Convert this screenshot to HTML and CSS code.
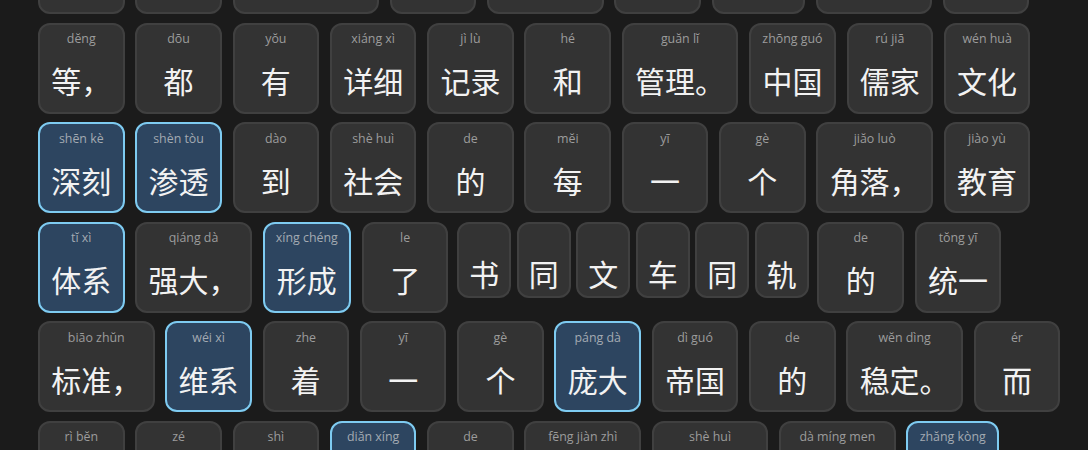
FILE: index.html
```html
<!DOCTYPE html>
<html lang="zh-CN">
<head>
<meta charset="utf-8">
<title>拼音阅读</title>
<link rel="stylesheet" href="styles.css">
</head>
<body>
<main class="reader">
  <div class="flow">
    <div class="tile"><span class="py">rén kŏu</span><span class="hz">人口</span></div>
    <div class="tile"><span class="py">hù jí</span><span class="hz">户籍</span></div>
    <div class="tile"><span class="py">tŭ dì miàn jī</span><span class="hz">土地面积</span></div>
    <div class="tile"><span class="py">fù shuì</span><span class="hz">赋税</span></div>
    <div class="tile"><span class="py">yáo yì</span><span class="hz">徭役、</span></div>
    <div class="tile"><span class="py">bīng yì</span><span class="hz">兵役</span></div>
    <div class="tile"><span class="py">gōng chéng</span><span class="hz">工程</span></div>
    <div class="tile"><span class="py">xíng fá</span><span class="hz">刑罚、</span></div>
    <div class="tile"><span class="py">shāng yè</span><span class="hz">商业</span></div>

    <div class="tile"><span class="py">dĕng</span><span class="hz">等，</span></div>
    <div class="tile"><span class="py">dōu</span><span class="hz">都</span></div>
    <div class="tile"><span class="py">yŏu</span><span class="hz">有</span></div>
    <div class="tile"><span class="py">xiáng xì</span><span class="hz">详细</span></div>
    <div class="tile"><span class="py">jì lù</span><span class="hz">记录</span></div>
    <div class="tile"><span class="py">hé</span><span class="hz">和</span></div>
    <div class="tile"><span class="py">guăn lĭ</span><span class="hz">管理。</span></div>
    <div class="tile"><span class="py">zhōng guó</span><span class="hz">中国</span></div>
    <div class="tile"><span class="py">rú jiā</span><span class="hz">儒家</span></div>
    <div class="tile"><span class="py">wén huà</span><span class="hz">文化</span></div>

    <div class="tile is-new"><span class="py">shēn kè</span><span class="hz">深刻</span></div>
    <div class="tile is-new"><span class="py">shèn tòu</span><span class="hz">渗透</span></div>
    <div class="tile"><span class="py">dào</span><span class="hz">到</span></div>
    <div class="tile"><span class="py">shè huì</span><span class="hz">社会</span></div>
    <div class="tile"><span class="py">de</span><span class="hz">的</span></div>
    <div class="tile"><span class="py">mĕi</span><span class="hz">每</span></div>
    <div class="tile"><span class="py">yī</span><span class="hz">一</span></div>
    <div class="tile"><span class="py">gè</span><span class="hz">个</span></div>
    <div class="tile"><span class="py">jiăo luò</span><span class="hz">角落，</span></div>
    <div class="tile"><span class="py">jiào yù</span><span class="hz">教育</span></div>

    <div class="tile is-new"><span class="py">tĭ xì</span><span class="hz">体系</span></div>
    <div class="tile"><span class="py">qiáng dà</span><span class="hz">强大，</span></div>
    <div class="tile is-new"><span class="py">xíng chéng</span><span class="hz">形成</span></div>
    <div class="tile"><span class="py">le</span><span class="hz">了</span></div>
    <div class="idiom">
      <div class="char">书</div>
      <div class="char">同</div>
      <div class="char">文</div>
      <div class="char">车</div>
      <div class="char">同</div>
      <div class="char">轨</div>
    </div>
    <div class="tile"><span class="py">de</span><span class="hz">的</span></div>
    <div class="tile"><span class="py">tŏng yī</span><span class="hz">统一</span></div>

    <div class="tile"><span class="py">biāo zhŭn</span><span class="hz">标准，</span></div>
    <div class="tile is-new"><span class="py">wéi xì</span><span class="hz">维系</span></div>
    <div class="tile"><span class="py">zhe</span><span class="hz">着</span></div>
    <div class="tile"><span class="py">yī</span><span class="hz">一</span></div>
    <div class="tile"><span class="py">gè</span><span class="hz">个</span></div>
    <div class="tile is-new"><span class="py">páng dà</span><span class="hz">庞大</span></div>
    <div class="tile"><span class="py">dì guó</span><span class="hz">帝国</span></div>
    <div class="tile"><span class="py">de</span><span class="hz">的</span></div>
    <div class="tile"><span class="py">wĕn dìng</span><span class="hz">稳定。</span></div>
    <div class="tile"><span class="py">ér</span><span class="hz">而</span></div>

    <div class="tile"><span class="py">rì bĕn</span><span class="hz">日本</span></div>
    <div class="tile"><span class="py">zé</span><span class="hz">则</span></div>
    <div class="tile"><span class="py">shì</span><span class="hz">是</span></div>
    <div class="tile is-new"><span class="py">diăn xíng</span><span class="hz">典型</span></div>
    <div class="tile"><span class="py">de</span><span class="hz">的</span></div>
    <div class="tile"><span class="py">fēng jiàn zhì</span><span class="hz">封建制</span></div>
    <div class="tile"><span class="py">shè huì</span><span class="hz">社会，</span></div>
    <div class="tile"><span class="py">dà míng men</span><span class="hz">大名们</span></div>
    <div class="tile is-new"><span class="py">zhăng kòng</span><span class="hz">掌控</span></div>
    <div class="tile"><span class="py">zhe</span><span class="hz">着</span></div>
    <div class="tile"><span class="py">gè zì</span><span class="hz">各自</span></div>
    <div class="tile"><span class="py">de</span><span class="hz">的</span></div>
    <div class="tile"><span class="py">lĭng dì</span><span class="hz">领地。</span></div>
  </div>
</main>
</body>
</html>
```

FILE: styles.css
```css
html, body {
  margin: 0;
  padding: 0;
  background: #1b1b1b;
  overflow: hidden;
}

.reader {
  padding: 0 0 0 38px;
}

.flow {
  width: 1040px;
  margin-top: -77px;
  display: flex;
  flex-wrap: wrap;
  align-items: flex-start;
  column-gap: 10.8px;
  row-gap: 8.5px;
}

.tile {
  box-sizing: border-box;
  height: 91px;
  min-width: 86.5px;
  padding: 4.5px 11.25px 0;
  border: 2px solid #404040;
  border-radius: 12px;
  background: #333333;
  display: flex;
  flex-direction: column;
  align-items: center;
}

.tile.is-new {
  background: #2d4560;
  border-color: #7ecbf1;
}

.py {
  font-family: "Open Sans", "Noto Sans", sans-serif;
  font-size: 12.4px;
  line-height: 20px;
  color: #9c9c9c;
  white-space: nowrap;
}

.is-new .py {
  color: #a3aab2;
}

.hz {
  margin-top: 11.3px;
  font-family: "Noto Sans CJK SC", sans-serif;
  font-size: 30px;
  line-height: 40px;
  color: #f2f2f2;
  white-space: nowrap;
}

.idiom {
  display: flex;
  gap: 5.5px;
  margin: 0 -2px;
}

.char {
  box-sizing: border-box;
  height: 76px;
  padding: 29.3px 10px 0;
  border: 2px solid #404040;
  border-radius: 12px;
  background: #333333;
  font-family: "Noto Sans CJK SC", sans-serif;
  font-size: 30px;
  line-height: 40px;
  color: #f2f2f2;
}
```
